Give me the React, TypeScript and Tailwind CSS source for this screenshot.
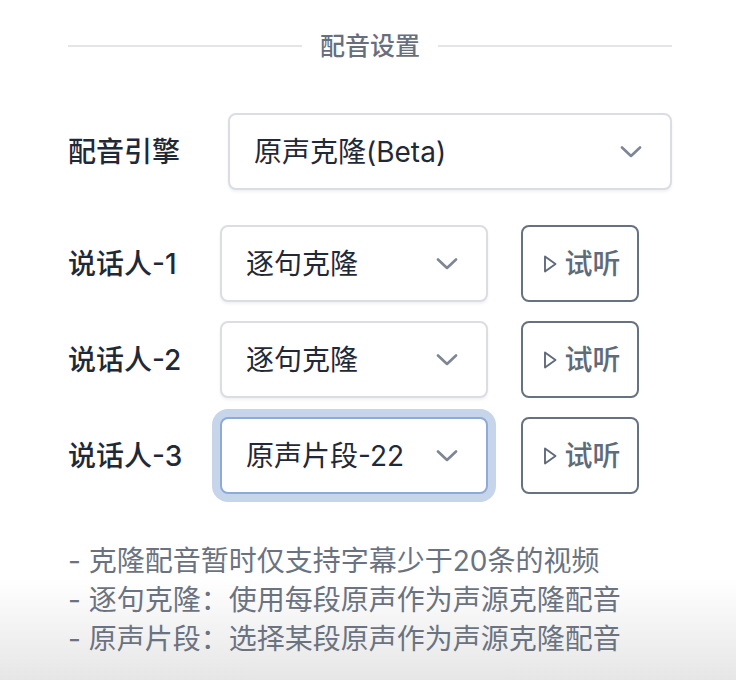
import React from 'react';

const Chevron = () => (
  <svg width="22" height="12" viewBox="0 0 22 12" fill="none" className="shrink-0">
    <polyline points="2,1.5 11,10 20,1.5" stroke="#7d8695" strokeWidth="2.6" strokeLinecap="round" strokeLinejoin="round" />
  </svg>
);

const Play = () => (
  <svg width="14" height="18" viewBox="0 0 14 18" fill="none" className="shrink-0">
    <polygon points="2,1.5 12.5,9 2,16.5" stroke="#5f6b7b" strokeWidth="1.9" strokeLinejoin="round" />
  </svg>
);

const Select = ({ value, focused, className }: { value: string; focused?: boolean; className?: string }) => (
  <div
    className={`flex h-[77px] items-center justify-between rounded-[8px] border-2 bg-white pl-[24px] pr-[28px] text-[28px] text-[#1f2937] ${
      focused ? 'border-[#8eaad6] ring-8 ring-[#c7d5ea]' : 'border-[#dadde2] shadow-[0_2px_3px_rgba(0,0,0,0.06)]'
    } ${className ?? ''}`}
  >
    <span>{value}</span>
    <Chevron />
  </div>
);

const App = () => {
  const speakers = [
    { name: '说话人-1', value: '逐句克隆' },
    { name: '说话人-2', value: '逐句克隆' },
    { name: '说话人-3', value: '原声片段-22', focused: true },
  ];

  const notes = [
    '- 克隆配音暂时仅支持字幕少于20条的视频',
    '- 逐句克隆：使用每段原声作为声源克隆配音',
    '- 原声片段：选择某段原声作为声源克隆配音',
  ];

  return (
    <div className="h-[680px] w-full overflow-hidden bg-[linear-gradient(to_bottom,#ffffff_0%,#ffffff_85%,#e6e6e6_100%)] font-[Inter,'Noto_Sans_CJK_SC',sans-serif]">
      <div className="pl-[68px] pr-[64px] pt-[28px]">
        <div className="flex items-center gap-[18px]">
          <div className="h-[2px] flex-1 bg-[#e3e5e8]" />
          <span className="text-[25px] font-medium leading-[36px] text-[#676f7c]">配音设置</span>
          <div className="h-[2px] flex-1 bg-[#e3e5e8]" />
        </div>

        <div className="mt-[49px] flex items-center">
          <div className="w-[160px] text-[28px] font-medium text-[#1f2937]">配音引擎</div>
          <Select value="原声克隆(Beta)" className="flex-1" />
        </div>

        <div className="mt-[35px] flex flex-col gap-[19px]">
          {speakers.map((s) => (
            <div key={s.name} className="flex items-center">
              <div className="w-[152px] text-[28px] font-medium text-[#1f2937]">{s.name}</div>
              <Select value={s.value} focused={s.focused} className="w-[268px]" />
              <button className="ml-[33px] flex h-[77px] w-[118px] items-center justify-center gap-[7px] rounded-[8px] border-2 border-[#667282] bg-white pl-[4px] text-[28px] font-medium text-[#5f6b7b]">
                <Play />
                <span>试听</span>
              </button>
            </div>
          ))}
        </div>

        <div className="mt-[48px] text-[28px] leading-[39px] text-[#6b7380]">
          {notes.map((n) => (
            <p key={n}>{n}</p>
          ))}
        </div>
      </div>
    </div>
  );
};

export default App;
